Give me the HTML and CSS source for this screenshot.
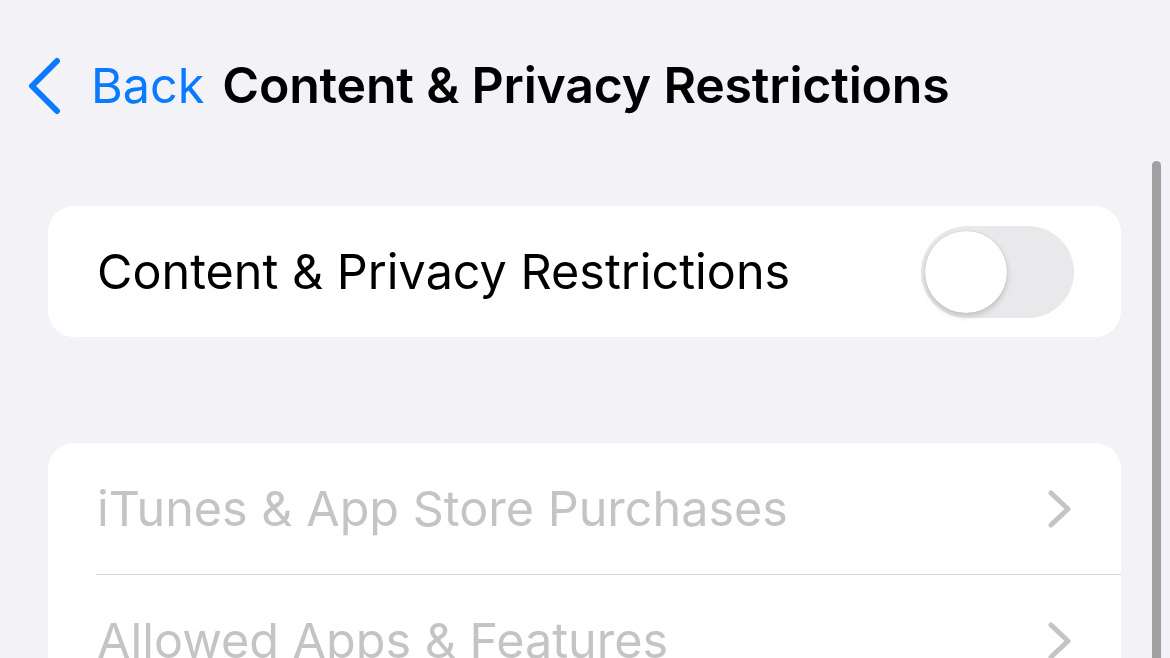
FILE: index.html
```html
<!DOCTYPE html>
<html>
<head>
<meta charset="utf-8">
<link rel="stylesheet" href="styles.css">
</head>
<body>
<div class="screen">
  <header class="nav">
    <div class="back">
      <svg class="back-chevron" width="36" height="58" viewBox="0 0 36 58">
        <path d="M31 4 L6 29 L31 54" fill="none" stroke="#0a7aff" stroke-width="6" stroke-linecap="round" stroke-linejoin="round"/>
      </svg>
      <span class="back-label">Back</span>
    </div>
    <h1 class="title">Content &amp; Privacy Restrictions</h1>
  </header>

  <section class="card card-toggle">
    <div class="row">
      <span class="row-label">Content &amp; Privacy Restrictions</span>
      <div class="switch"><div class="knob"></div></div>
    </div>
  </section>

  <section class="card card-list">
    <div class="row row-link">
      <span class="row-label dim">iTunes &amp; App Store Purchases</span>
      <svg class="chev" width="26" height="40" viewBox="0 0 26 40"><path d="M4 4 L21 20 L4 36" fill="none" stroke="#c4c4c6" stroke-width="5" stroke-linecap="round" stroke-linejoin="round"/></svg>
    </div>
    <div class="sep"></div>
    <div class="row row-link">
      <span class="row-label dim">Allowed Apps &amp; Features</span>
      <svg class="chev" width="26" height="40" viewBox="0 0 26 40"><path d="M4 4 L21 20 L4 36" fill="none" stroke="#c4c4c6" stroke-width="5" stroke-linecap="round" stroke-linejoin="round"/></svg>
    </div>
  </section>

  <div class="scrollbar"></div>
</div>
</body>
</html>
```

FILE: styles.css
```css
html, body {
  margin: 0;
  padding: 0;
  background: #f2f2f7;
}
body {
  width: 1170px;
  height: 658px;
  overflow: hidden;
  font-family: Inter, "Noto Sans", "Liberation Sans", sans-serif;
}
.screen {
  position: relative;
  width: 1170px;
  height: 658px;
  overflow: hidden;
  padding: 0 49px 0 48px;
  box-sizing: border-box;
}
.nav {
  display: flex;
  align-items: flex-start;
  height: 176px;
  margin-left: -22px;
  padding-top: 56px;
  box-sizing: border-box;
}
.back {
  display: flex;
  align-items: center;
  color: #0a7aff;
}
.back-chevron {
  display: block;
  margin-right: 29px;
}
.back-label {
  font-size: 48.5px;
  font-weight: 400;
  margin-right: 18px;
}
.title {
  margin: 0;
  font-size: 50px;
  font-weight: 600;
  letter-spacing: -0.2px;
  color: #000;
  line-height: 58px;
}
.card {
  background: #fff;
  border-radius: 26px;
  overflow: hidden;
}
.card-toggle {
  margin-top: 30px;
}
.card-list {
  margin-top: 106px;
}
.row {
  display: flex;
  align-items: center;
  justify-content: space-between;
  height: 131px;
  padding: 0 47px 0 49px;
}
.row-label {
  font-size: 48.5px;
  color: #000;
  white-space: nowrap;
}
.row-label.dim {
  color: #c4c4c6;
}
.switch {
  width: 153px;
  height: 92px;
  border-radius: 46px;
  background: #e9e9eb;
  position: relative;
  flex: none;
}
.knob {
  position: absolute;
  left: 4px;
  top: 5px;
  width: 82px;
  height: 82px;
  border-radius: 50%;
  background: #fff;
  box-shadow: 0 3px 6px rgba(0,0,0,0.18), 0 0 1px rgba(0,0,0,0.2);
}
.chev {
  display: block;
  margin-right: 1px;
  flex: none;
}
.sep {
  height: 1px;
  background: #d8d8da;
  margin-left: 48px;
}
.scrollbar {
  position: absolute;
  left: 1152px;
  top: 161px;
  width: 9px;
  height: 520px;
  border-radius: 5px;
  background: #a0a0a0;
}
```
